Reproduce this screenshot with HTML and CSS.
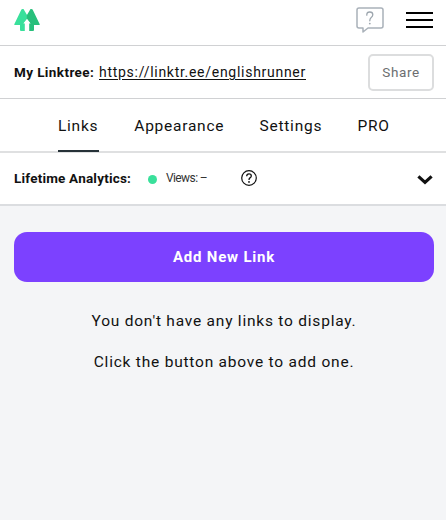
FILE: index.html
```html
<!DOCTYPE html>
<html lang="en">

<head>
    <meta charset="UTF-8">
    <meta name="viewport" content="width=device-width, initial-scale=1.0">
    <title>Linktree</title>
    <link rel="stylesheet" href="styles.css">
</head>

<body>

    <header class="topbar">
        <svg class="logo" width="26" height="22" viewBox="0 0 26 22">
            <path fill="#39e09b" d="M7.4 0.6 Q7.8 0 8.5 0 H9.5 L13.2 6.2 V11 L10 14 H11 V22 H7 Q6 22 6 21 V16 H0.8 Q-0.2 16 0.4 15Z"/>
            <path fill="#28bf7b" d="M18.6 0.6 Q18.2 0 17.5 0 H16.5 L12.8 6.2 V11 L16 14 H15 V22 H19 Q20 22 20 21 V16 H25.2 Q26.2 16 25.6 15Z"/>
            <path fill="#fff" d="M13 9.8 L16.6 14.6 H15.2 V22 H10.8 V14.6 H9.4Z"/>
        </svg>
        <div class="topbar-icons">
            <svg class="help" width="28" height="26" viewBox="0 0 28 26">
                <path fill="none" stroke="#a9b1b9" stroke-width="1.5" stroke-linejoin="round" d="M3 1 H25 Q27 1 27 3 V19 Q27 21 25 21 H12 L7 25 V21 H3 Q1 21 1 19 V3 Q1 1 3 1Z"/>
                <path fill="none" stroke="#9da6ae" stroke-width="1.3" stroke-linecap="round" d="M10.8 8.2 V7.8 Q10.8 5 13.8 5 Q16.8 5 16.8 7.8 Q16.8 9.4 15 10.8 Q13.8 11.8 13.8 13.8"/>
                <circle cx="13.8" cy="16.6" r="0.9" fill="#9da6ae"/>
            </svg>
            <div class="menu">
                <span></span>
                <span></span>
                <span></span>
            </div>
        </div>
    </header>

    <div class="share-bar">
        <div class="my-link">
            <strong class="my-link-label">My Linktree:</strong>
            <a class="my-link-url" href="#">https://linktr.ee/englishrunner</a>
        </div>
        <button class="btn-share">Share</button>
    </div>

    <nav class="tabs">
        <a class="tab active" href="#">Links</a>
        <a class="tab" href="#">Appearance</a>
        <a class="tab" href="#">Settings</a>
        <a class="tab" href="#">PRO</a>
    </nav>

    <div class="analytics">
        <strong class="analytics-title">Lifetime Analytics:</strong>
        <span class="dot"></span>
        <span class="views">Views: –</span>
        <svg class="question" width="16" height="16" viewBox="0 0 16 16">
            <circle cx="8" cy="8" r="7.3" fill="none" stroke="#111" stroke-width="1.2"/>
            <path fill="none" stroke="#111" stroke-width="1.3" d="M5.7 6.3 Q5.7 3.9 8 3.9 Q10.3 3.9 10.3 6 Q10.3 7 9 7.9 Q8 8.6 8 9.9"/>
            <circle cx="8" cy="11.9" r="0.9" fill="#111"/>
        </svg>
        <svg class="chevron" width="16" height="10" viewBox="0 0 16 10">
            <path fill="none" stroke="#111" stroke-width="3.2" d="M1.4 1.4 L8 7.4 L14.6 1.4"/>
        </svg>
    </div>

    <main class="content">
        <button class="btn-add">Add New Link</button>
        <p class="empty empty-first">You don't have any links to display.</p>
        <p class="empty empty-second">Click the button above to add one.</p>
    </main>

</body>

</html>
```
FILE: styles.css
```css
* {
    box-sizing: border-box;
}

body {
    margin: 0;
    min-height: 520px;
    background-color: #f4f5f7;
    color: #111;
    font-family: Roboto, "Liberation Sans", sans-serif;
    font-size: 15px;
    white-space: nowrap;
}

a {
    color: inherit;
}

button {
    cursor: pointer;
    font-family: inherit;
}

.topbar {
    display: flex;
    justify-content: space-between;
    align-items: flex-start;
    height: 46px;
    padding: 9px 13px 0 14px;
    background-color: #fff;
    border-bottom: 1px solid #d0d1d3;
}

.topbar-icons {
    display: flex;
    gap: 22px;
}

.help {
    margin-top: -2px;
}

.menu {
    display: flex;
    flex-direction: column;
    gap: 5px;
    width: 27px;
    padding-top: 3px;
}

.menu span {
    height: 2px;
    background-color: #000;
}

.share-bar {
    display: flex;
    justify-content: space-between;
    align-items: center;
    height: 53px;
    padding: 0 12px 0 14px;
    background-color: #fff;
    border-bottom: 1px solid #d0d1d3;
}

.my-link {
    display: flex;
    gap: 5px;
}

.my-link-label {
    width: 80px;
    font-size: 13.5px;
    font-weight: 700;
    line-height: 18px;
    letter-spacing: 0.4px;
}

.my-link-url {
    font-size: 14px;
    line-height: 18px;
    letter-spacing: 0.72px;
    text-underline-offset: 2px;
}

.btn-share {
    width: 66px;
    height: 37px;
    padding: 0 0 1px;
    background-color: #fff;
    border: 2px solid #dcddde;
    border-radius: 5px;
    color: #6c6e70;
    font-size: 13.5px;
    letter-spacing: 0.6px;
}

.tabs {
    display: flex;
    gap: 35.3px;
    height: 54px;
    padding-left: 58px;
    background-color: #fff;
    border-bottom: 2px solid #dfe0e1;
}

.tab {
    height: 53px;
    padding-top: 17px;
    font-size: 15.5px;
    line-height: 20px;
    letter-spacing: 0.75px;
    text-decoration: none;
}

.tab.active {
    width: 41px;
    border-bottom: 2px solid #263238;
}

.analytics {
    display: flex;
    align-items: center;
    height: 53px;
    padding: 0 13px 2px 14px;
    background-color: #fff;
    border-bottom: 2px solid #dbdde0;
}

.analytics-title {
    width: 134px;
    font-size: 13.5px;
    letter-spacing: 0.2px;
}

.dot {
    width: 9px;
    height: 9px;
    margin-top: 3px;
    border-radius: 50%;
    background-color: #39e09b;
}

.views {
    width: 84px;
    padding-left: 9px;
    color: #333;
    font-size: 12px;
    letter-spacing: -0.6px;
}

.chevron {
    margin-left: auto;
    margin-top: 4px;
}

.content {
    padding: 26px 12px 0 14px;
    text-align: center;
}

.btn-add {
    display: block;
    width: 100%;
    height: 50px;
    padding: 0;
    background-color: #7c41ff;
    border: none;
    border-radius: 13px;
    color: #fff;
    font-size: 15px;
    font-weight: 700;
    letter-spacing: 0.8px;
}

.empty {
    margin: 0;
    font-size: 15.5px;
    line-height: 20px;
    letter-spacing: 0.78px;
}

.empty-first {
    padding-top: 29px;
}

.empty-second {
    padding-top: 21px;
}
```
